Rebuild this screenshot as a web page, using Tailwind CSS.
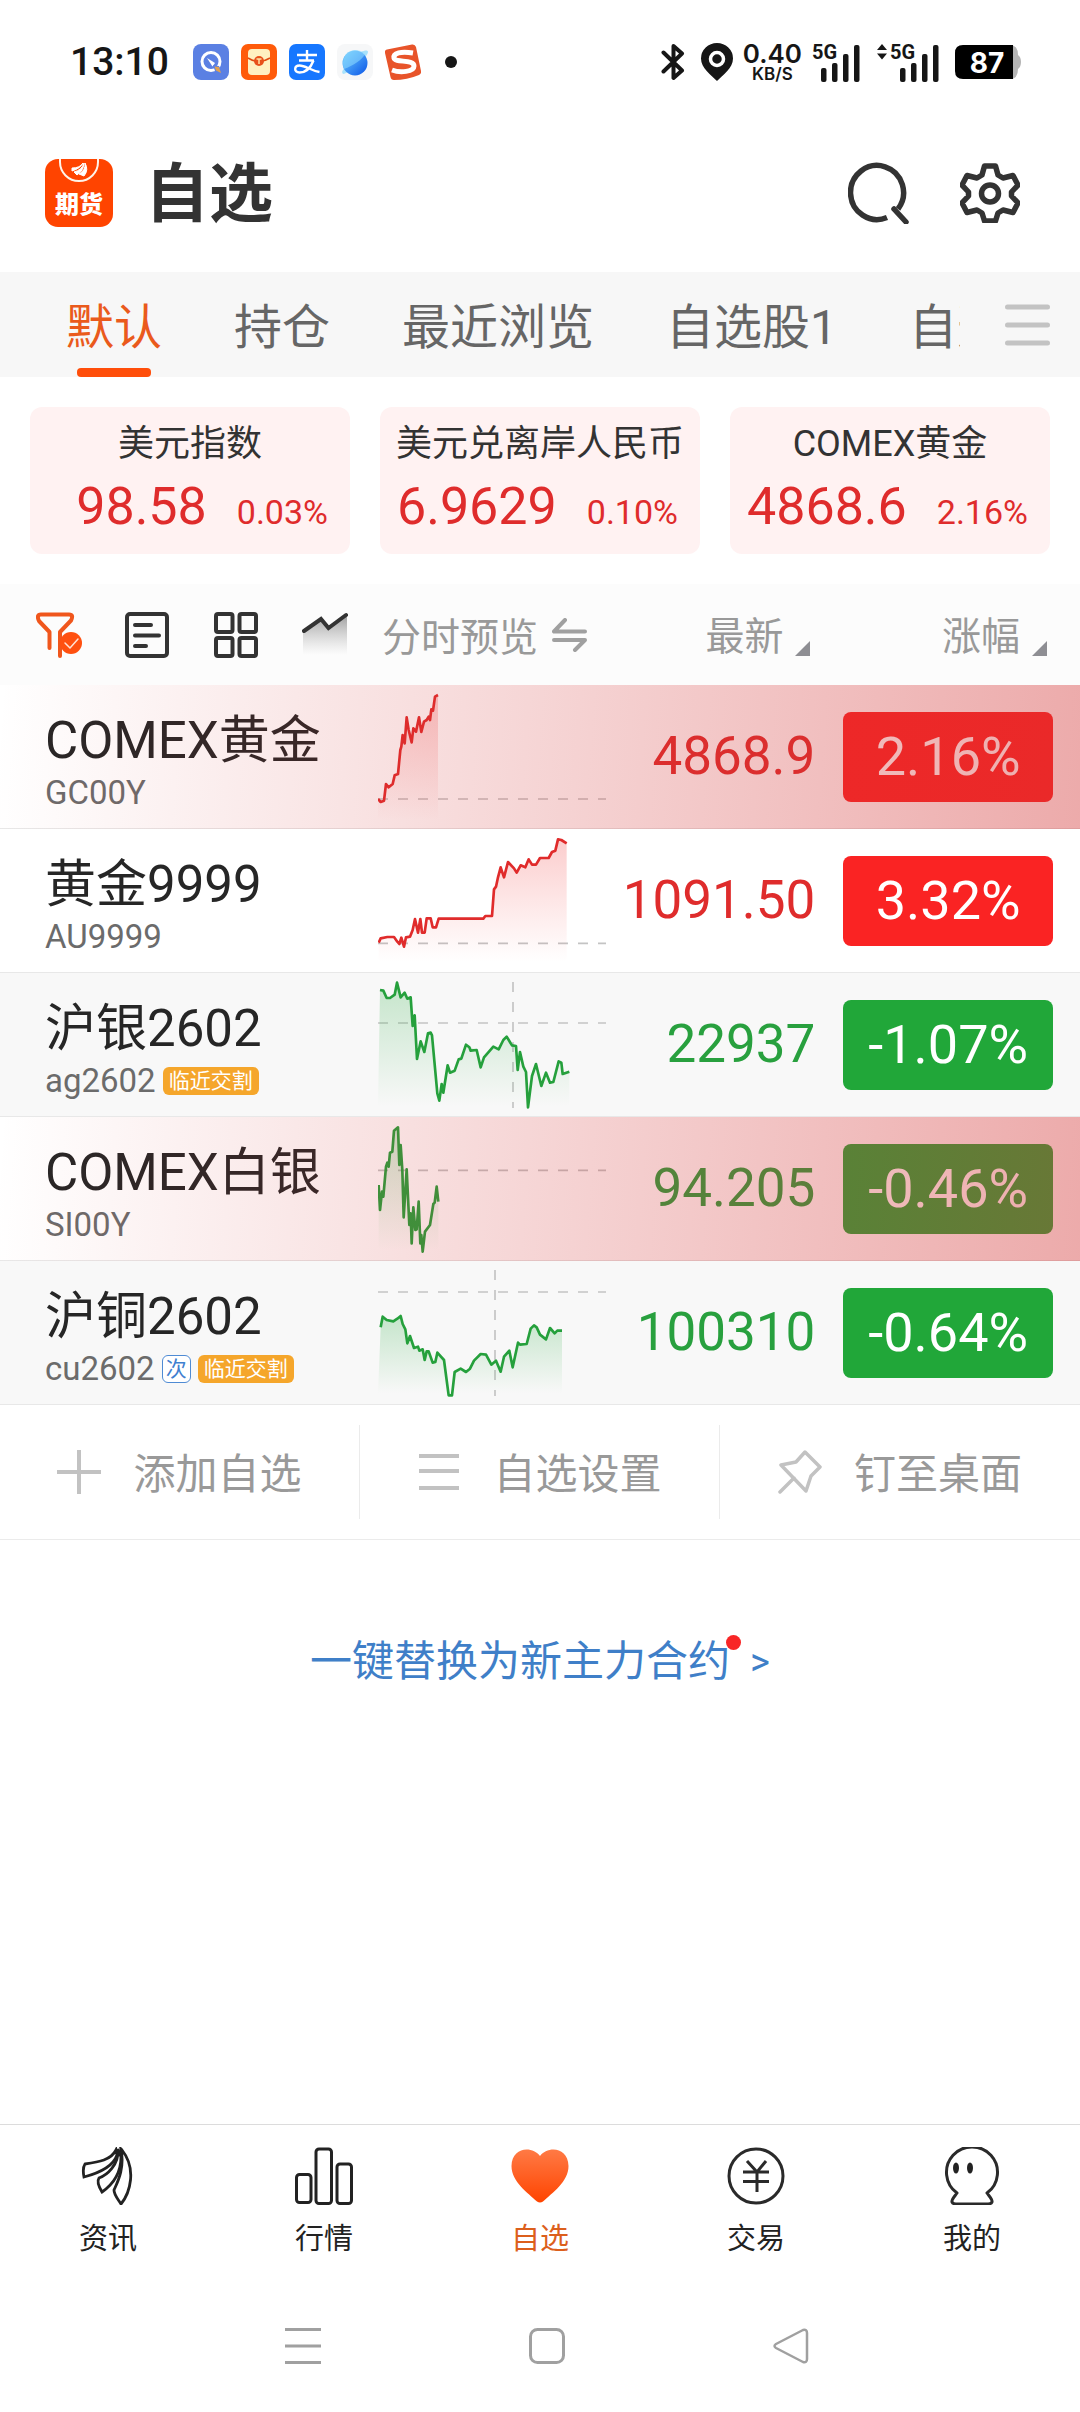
<!DOCTYPE html>
<html lang="zh-CN">
<head>
<meta charset="utf-8">
<meta name="viewport" content="width=device-width, initial-scale=1">
<title>自选</title>
<script src="https://cdn.jsdelivr.net/npm/@tailwindcss/browser@4"></script>
</head>
<body class="bg-white font-['Roboto','Noto_Sans_CJK_SC',sans-serif] text-[#262626]">
<div class="flex min-h-screen flex-col">

  <!-- Status bar -->
  <div class="flex h-[124px] items-center justify-between pr-[59px] pl-[70px]">
    <div class="flex items-center gap-3">
      <span class="mr-3 text-[39px] leading-none font-medium text-[#161616]">13:10</span>
      <svg class="size-9" viewBox="0 0 36 36"><rect width="36" height="36" rx="8" fill="#5b80e3"/><circle cx="18" cy="17.500" r="9" fill="none" stroke="#fff" stroke-width="3"/><path d="M14 14l8 5-2.500 3.500z" fill="#fff"/><path d="M20 21l6 1 3 7-7-2z" fill="#5b80e3"/><path d="M21.500 22.500l4.500.5 2 6-5-2.500z" fill="#e0a050"/></svg>
      <svg class="size-9" viewBox="0 0 36 36"><rect width="36" height="36" rx="7" fill="#ff5b0a"/><rect x="7" y="5" width="22" height="26" rx="4" fill="#fff0c0"/><path d="M7 14q11 7 22 0" fill="none" stroke="#e04a10" stroke-width="1.500"/><circle cx="18" cy="17" r="5" fill="#e8501a"/><path d="M15.500 15h5M18 15v5" stroke="#ffe0a0" stroke-width="1.500"/></svg>
      <svg class="size-9" viewBox="0 0 36 36"><rect width="36" height="36" rx="7" fill="#1677ff"/><g fill="none" stroke="#fff" stroke-width="2.400"><path d="M8 11h20M18 6v10M10 16.500h15"/><path d="M24.500 16.500C22 23 17 28.500 10.500 28.500c-6 0-5.500-7 0-7 6 0 11 5 20 6.500"/></g></svg>
      <svg class="size-9" viewBox="0 0 36 36"><defs><linearGradient id="planet" x1="0" y1="0" x2="1" y2="1"><stop offset="0" stop-color="#6fd0ff"/><stop offset="1" stop-color="#0a55e8"/></linearGradient></defs><rect width="36" height="36" rx="8" fill="#f6f7f8"/><path d="M6 30c-3-3 3-7 6-10L24 8c4-2 7-2 7 0 0 5-18 21-25 22z" fill="#a8e2fb"/><circle cx="18" cy="19" r="12.500" fill="url(#planet)"/><path d="M7 25C16 22 26 15 28 10 22 4 12 5 8 12c-2.500 4-2.500 9-1 13z" fill="#8fdcff" opacity=".55"/></svg>
      <svg class="size-9" viewBox="0 0 36 36"><path d="M2 5.500L27 .500q3-.500 4 2.500l5 24q.500 3-2 4-12 5-25 5-3 0-3.500-3L0 9q-.500-3 2-3.500z" fill="#e8542a"/><path d="M28 9C16 7 8 9 9 14c1 5 20 1 20 8 0 6-14 7-22 4" fill="none" stroke="#fff" stroke-width="5"/></svg>
      <span class="ml-3 size-3 rounded-full bg-[#161616]"></span>
    </div>
    <div class="flex items-center">
      <svg class="h-[38px] w-6" viewBox="0 0 24 38" fill="none" stroke="#161616" stroke-width="4" stroke-linejoin="round" stroke-linecap="round"><path d="M2.500 9.500L21 27.500 12.500 35V3L21 10.500 2.500 28.500"/></svg>
      <svg class="ml-4 h-[38px] w-8" viewBox="0 0 32 38"><path d="M16 0a16 15.500 0 0 1 16 15.500C32 25 22 32 16 38 10 32 0 25 0 15.500A16 15.500 0 0 1 16 0z" fill="#161616"/><circle cx="16" cy="16" r="6.500" fill="#161616" stroke="#fff" stroke-width="3.500"/></svg>
      <div class="mx-2.5 flex flex-col items-center font-['Inter'] font-semibold text-[#161616]">
        <span class="text-[26px] leading-6">0.40</span>
        <span class="text-[17px] leading-4">KB/S</span>
      </div>
      <svg class="h-10 w-12" viewBox="0 -2 48 40" fill="#161616"><text x="0" y="15" font-size="20" font-weight="700" font-family="Roboto">5G</text><rect x="9" y="24" width="5.500" height="14" rx="2"/><rect x="20" y="19" width="5.500" height="19" rx="2"/><rect x="31" y="10" width="5.500" height="28" rx="2"/><rect x="42" y="1" width="5.500" height="37" rx="2"/></svg>
      <svg class="ml-[17px] h-10 w-[62px]" viewBox="0 -2 62 40" fill="#161616"><path d="M0 6L5 0l5 6zM0 9.500L5 15.500l5-6z"/><text x="13" y="15" font-size="20" font-weight="700" font-family="Roboto">5G</text><rect x="23" y="24" width="5.500" height="14" rx="2"/><rect x="34" y="19" width="5.500" height="19" rx="2"/><rect x="45" y="10" width="5.500" height="28" rx="2"/><rect x="56" y="1" width="5.500" height="37" rx="2"/></svg>
      <svg class="ml-4 h-[34px] w-[66px]" viewBox="0 0 66 34"><path d="M50 0h5q8 0 8 10 3 2 3 7t-3 7q0 10-8 10h-5z" fill="#b5b5b5"/><path d="M8 0h50v34H8q-8 0-8-8V8q0-8 8-8z" fill="#000"/><text x="32" y="28" text-anchor="middle" font-size="28" font-weight="700" font-family="Inter" fill="#fff">87</text></svg>
    </div>
  </div>

  <!-- App header -->
  <header class="mb-2.5 flex h-[138px] items-center pr-[60px] pl-[45px]">
    <svg class="size-[68px]" viewBox="0 0 68 68"><rect width="68" height="68" rx="13" fill="#ff4400"/><path d="M15 0v3a19 19 0 0 0 38 0V0" fill="none" stroke="#fff3e8" stroke-width="2"/><path d="M27 9q8 0 11-5-2 5-11 8zM29 13q8-2 10-9 0 7-7 12zM34 15q7-4 6-11 4 7-1 13z" fill="#fff" stroke="#fff" stroke-width="1"/><text x="34" y="54" text-anchor="middle" font-size="24" font-weight="900" font-family="Noto Sans CJK SC" fill="#fff">期货</text></svg>
    <h1 class="ml-8 pt-1 text-[64px] leading-none font-bold text-[#333]">自选</h1>
    <div class="ml-auto flex items-center gap-[50px]">
      <button aria-label="搜索" class="block"><svg class="size-[62px]" viewBox="0 0 62 62" fill="none" stroke="#333" stroke-width="5.500"><path d="M39 55.500A26.500 27 0 1 1 50 47"/><path d="M46 47L58 60" stroke-linecap="round"/></svg></button>
      <button aria-label="设置" class="block"><svg class="size-[60px]" viewBox="0 0 60 60" fill="none" stroke="#333" stroke-width="5.500" stroke-linejoin="round"><path d="M24.500 3h11l2.500 9 5 3 10-2.500 5 9.500-6.500 7v4l6.500 7-5 9.500-10-2.500-5 3-2.500 8h-11l-2.500-8-5-3-10 2.500-5-9.500 6.500-7v-4l-6.500-7 5-9.500 10 2.500 5-3z"/><circle cx="30" cy="30.500" r="8.500"/></svg></button>
    </div>
  </header>

  <!-- Watchlist tabs -->
  <div class="flex h-[105px] items-stretch bg-[#f7f7f7] text-[48px] leading-none text-[#666]">
    <div class="flex flex-1 gap-[72px] overflow-hidden pl-[66px] whitespace-nowrap">
      <button class="relative shrink-0 pt-1.5 text-[#ea5a1c]">默认<span class="absolute bottom-0 left-1/2 h-[9px] w-[74px] -translate-x-1/2 rounded-sm bg-[#ff4e0a]"></span></button>
      <button class="shrink-0 pt-1.5">持仓</button>
      <button class="shrink-0 pt-1.5">最近浏览</button>
      <button class="shrink-0 pt-1.5">自选股1</button>
      <button class="shrink-0 pt-1.5">自选股2</button>
    </div>
    <button aria-label="管理分组" class="flex w-[120px] shrink-0 items-center justify-end pr-[30px]">
      <svg class="h-[42px] w-[45px]" viewBox="0 0 45 42" stroke="#c3c3c3" stroke-width="5" stroke-linecap="round"><path d="M2.500 3h40M2.500 21h40M2.500 39h40"/></svg>
    </button>
  </div>

  <!-- Index cards -->
  <section class="grid grid-cols-3 gap-[30px] p-[30px] text-[#df2c2c]">
    <a href="#" class="flex h-[147px] flex-col rounded-xl bg-[#fff2f2] pt-4">
      <span class="text-center text-[36px] leading-[42px] text-[#333]">美元指数</span>
      <span class="flex items-baseline justify-end gap-[30px] pt-2.5 pr-[22px]"><span class="text-[52px] leading-[64px]">98.58</span><span class="text-[34px]">0.03%</span></span>
    </a>
    <a href="#" class="flex h-[147px] flex-col rounded-xl bg-[#fff2f2] pt-4">
      <span class="text-center text-[36px] leading-[42px] text-[#333]">美元兑离岸人民币</span>
      <span class="flex items-baseline justify-end gap-[30px] pt-2.5 pr-[22px]"><span class="text-[52px] leading-[64px]">6.9629</span><span class="text-[34px]">0.10%</span></span>
    </a>
    <a href="#" class="flex h-[147px] flex-col rounded-xl bg-[#fff2f2] pt-4">
      <span class="text-center text-[36px] leading-[42px] text-[#333]">COMEX黄金</span>
      <span class="flex items-baseline justify-end gap-[30px] pt-2.5 pr-[22px]"><span class="text-[52px] leading-[64px]">4868.6</span><span class="text-[34px]">2.16%</span></span>
    </a>
  </section>

  <!-- Quotes -->
  <table class="w-full table-fixed border-separate border-spacing-0">
    <colgroup><col class="w-[35%]"><col class="w-[22%]"><col class="w-[18.5%]"><col class="w-[24.5%]"></colgroup>
    <thead class="bg-[#fcfcfc] text-[39px] leading-none text-[#999]">
      <tr>
        <th colspan="2" class="h-[101px] p-0 font-normal">
          <div class="flex items-center pl-9">
            <button aria-label="筛选"><svg class="h-[46px] w-[46px]" viewBox="0 0 46 46" fill="none" stroke="#f0561c" stroke-width="4" stroke-linejoin="round" stroke-linecap="round"><path d="M13.500 36V20L3 9Q0 2.500 5 2.500h28q5 0 2 6L24 20v24"/><circle cx="35" cy="31" r="11" fill="#ff5010" stroke="none"/><path d="M29 31l5 5 8-9" stroke="#ffe3d5" stroke-width="1.500"/></svg></button>
            <button aria-label="列表" class="ml-[43px]"><svg class="h-[46px] w-11" viewBox="0 0 44 46" fill="none" stroke="#333" stroke-width="4" stroke-linecap="round"><rect x="2" y="2" width="40" height="42" rx="3"/><path d="M10 13h16M10 23.500h24M10 34h11"/></svg></button>
            <button aria-label="宫格" class="ml-[45px]"><svg class="h-[46px] w-11" viewBox="0 0 44 46" fill="none" stroke="#333" stroke-width="4"><rect x="2" y="2" width="16.500" height="18" rx="2"/><rect x="25.500" y="2" width="16.500" height="18" rx="2"/><rect x="2" y="26" width="16.500" height="18" rx="2"/><rect x="25.500" y="26" width="16.500" height="18" rx="2"/></svg></button>
            <button class="ml-11 flex items-center">
              <svg class="h-[46px] w-[46px]" viewBox="0 0 46 46"><defs><linearGradient id="mini" x1="0" y1="0" x2="0" y2="1"><stop offset="0" stop-color="#555" stop-opacity=".6"/><stop offset="1" stop-color="#999" stop-opacity="0"/></linearGradient></defs><path d="M1 18L19 6l8 9L45 1v42H1z" fill="url(#mini)"/><path d="M2 19L19 7l7.500 9L44 3" fill="none" stroke="#333" stroke-width="4" stroke-linecap="round"/></svg>
              <span class="mr-3.5 ml-[34px] pt-2">分时预览</span>
              <svg class="h-[34px] w-[35px]" viewBox="0 0 35 34" fill="none" stroke="#a0a0a0" stroke-width="4" stroke-linecap="round" stroke-linejoin="round"><path d="M13 2L2 13.500h31M2 22h31L23 32"/></svg>
            </button>
          </div>
        </th>
        <th class="p-0 font-normal"><button class="ml-auto flex items-end pt-1.5 pr-[5px]">最新<svg class="mb-px ml-3 size-[15px]" viewBox="0 0 15 15"><path d="M15 0v15H0z" fill="#8e8e93"/></svg></button></th>
        <th class="p-0 font-normal"><button class="ml-auto flex items-end pt-1.5 pr-[33px]">涨幅<svg class="mb-px ml-3 size-[15px]" viewBox="0 0 15 15"><path d="M15 0v15H0z" fill="#8e8e93"/></svg></button></th>
      </tr>
    </thead>
    <tbody class="text-[54px] leading-none">
      <tr class="relative bg-white">
        <td class="h-36 border-b border-[#e8e8e8] p-0 pt-3 pl-[45px] whitespace-nowrap">
          <div class="text-[51px] leading-[60px]">COMEX黄金</div>
          <div class="flex h-11 items-center text-[33px] leading-10 text-[#6b6b6b]">GC00Y</div>
        </td>
        <td class="border-b border-[#e8e8e8] p-0">
          <svg class="block h-[143px] w-[230px]" viewBox="54 15 690 429" fill="none">
            <defs><linearGradient id="up" x1="0" y1="0" x2="0" y2="1"><stop offset="0" stop-color="#f03030" stop-opacity=".24"/><stop offset="1" stop-color="#f03030" stop-opacity="0"/></linearGradient><linearGradient id="down" x1="0" y1="0" x2="0" y2="1"><stop offset="0" stop-color="#22a83a" stop-opacity=".24"/><stop offset="1" stop-color="#22a83a" stop-opacity="0"/></linearGradient></defs>
            <path d="M54 357H738" stroke="#c4c4c4" stroke-width="5" stroke-dasharray="30 30"/>
            <path fill="url(#up)" d="M54 420V357L62 366 72 362 78 312 86 322 98 312 104 286 114 282 121 210 128 165 132 190 140 112 146 150 155 187 160 145 168 155 177 112 184 156 192 125 208 120 219 88 225 50 234 45V420z"/>
            <path stroke="#e02b2b" stroke-width="8" stroke-linejoin="round" d="M54 357L62 366 72 362 78 312 86 322 98 312 104 286 114 282 121 210 124 200 128 165 134 190 140 112 146 150 155 187 160 145 168 155 177 112 184 156 192 125 200 120 206 110 210 120 214 88 219 92 225 50 234 45"/>
          </svg>
        </td>
        <td class="border-b border-[#e8e8e8] p-0 text-right text-[53px] text-[#df2c2c]">4868.9</td>
        <td class="border-b border-[#e8e8e8] p-0 pr-[27px] pl-7"><span class="flex h-[90px] items-center justify-center rounded-lg bg-[#fa2323] text-white">2.16%</span><i class="pointer-events-none absolute inset-0 bg-[linear-gradient(94deg,rgba(210,50,50,0),rgba(210,50,50,0.41))]"></i></td>
      </tr>
      <tr class="bg-white">
        <td class="h-36 border-b border-[#e8e8e8] p-0 pt-3 pl-[45px] whitespace-nowrap">
          <div class="text-[51px] leading-[60px]">黄金9999</div>
          <div class="flex h-11 items-center text-[33px] leading-10 text-[#6b6b6b]">AU9999</div>
        </td>
        <td class="border-b border-[#e8e8e8] p-0">
          <svg class="block h-[143px] w-[230px]" viewBox="54 447 690 429" fill="none">
            <path d="M54 790H738" stroke="#c4c4c4" stroke-width="5" stroke-dasharray="30 30"/>
            <path fill="url(#up)" d="M56 845V788L62 775 100 770 118 790 124 773 132 800 138 772 150 770 165 717 174 758 181 717 190 762 200 715 212 716 218 742 228 742 236 716H370L374 708H396L402 628 414 592 422 562 432 592 444 546 470 578 482 556 496 562 506 538 516 554H526L540 534H566L576 516 586 512 594 478 620 490V845z"/>
            <path stroke="#e02b2b" stroke-width="8" stroke-linejoin="round" d="M56 788L62 775 82 771H102L112 785 118 792 124 773 132 800 138 772 150 770 158 750 165 717 174 758 181 717 186 758 194 758 200 715H212L218 742H228L236 716H370L376 708H396L402 628 408 620 414 592 422 562 432 592 444 546 462 565 470 578 482 556 496 562 506 538 516 554H528L540 534H566L576 516 586 512 594 478 604 480 620 490"/>
          </svg>
        </td>
        <td class="border-b border-[#e8e8e8] p-0 text-right text-[53px] text-[#df2c2c]">1091.50</td>
        <td class="border-b border-[#e8e8e8] p-0 pr-[27px] pl-7"><span class="flex h-[90px] items-center justify-center rounded-lg bg-[#fa2323] text-white">3.32%</span></td>
      </tr>
      <tr class="bg-[#f8f8f8]">
        <td class="h-36 border-b border-[#e8e8e8] p-0 pt-3 pl-[45px] whitespace-nowrap">
          <div class="text-[51px] leading-[60px]">沪银2602</div>
          <div class="flex h-11 items-center gap-[7px] text-[33px] leading-10 text-[#6b6b6b]">ag2602<span class="rounded-md bg-[#f5a62b] px-1.5 text-[21px] leading-7 text-white">临近交割</span></div>
        </td>
        <td class="border-b border-[#e8e8e8] p-0">
          <svg class="block h-[143px] w-[230px]" viewBox="54 9 690 429" fill="none">
            <path d="M54 159H738M459 36V414" stroke="#c4c4c4" stroke-width="5" stroke-dasharray="30 30"/>
            <path fill="url(#down)" d="M54 410L60 60 70 62 80 84 90 84 104 74 111 38 122 82 134 68 142 86 152 82 158 168 164 136 171 267 182 214 193 246 204 190 216 196 232 370 238 392 245 342 250 368 263 286 270 308 284 302 296 268 318 224 350 240 362 292 372 262 400 230 416 238 440 200 456 226 468 228 473 300 480 246 498 306 504 410 516 318 528 282 544 348 558 308 576 340 596 274 608 312 628 305V410z"/>
            <path stroke="#25a03c" stroke-width="8" stroke-linejoin="round" d="M60 60L70 62 80 84 90 84 104 74 111 38 122 82 134 68 142 86 152 82 158 168 164 136 171 267 182 214 193 246 204 190 212 188 216 196 232 370 238 392 245 342 250 368 263 286 270 308 284 302 296 268 304 266 318 224 328 232 332 242 350 240 362 292 372 262 400 230 416 238 430 210 440 200 456 226 468 228 473 300 480 246 490 290 498 306 504 412 516 318 528 282 544 348 558 308 570 338 580 336 596 274 604 278 608 312 628 305"/>
          </svg>
        </td>
        <td class="border-b border-[#e8e8e8] p-0 text-right text-[53px] text-[#28a03e]">22937</td>
        <td class="border-b border-[#e8e8e8] p-0 pr-[27px] pl-7"><span class="flex h-[90px] items-center justify-center rounded-lg bg-[#21a739] text-white">-1.07%</span></td>
      </tr>
      <tr class="relative bg-white">
        <td class="h-36 border-b border-[#e8e8e8] p-0 pt-3 pl-[45px] whitespace-nowrap">
          <div class="text-[51px] leading-[60px]">COMEX白银</div>
          <div class="flex h-11 items-center text-[33px] leading-10 text-[#6b6b6b]">SI00Y</div>
        </td>
        <td class="border-b border-[#e8e8e8] p-0">
          <svg class="block h-[143px] w-[230px]" viewBox="54 441 690 429" fill="none">
            <path d="M54 601H738" stroke="#c4c4c4" stroke-width="5" stroke-dasharray="30 30"/>
            <path fill="url(#down)" d="M56 840V645L60 720 66 665 70 680 78 590 97 545 102 482 114 472 118 585 122 525 131 742 140 598 155 820 160 712 168 780 176 695 188 840 195 785 210 765 230 650 235 695V840z"/>
            <path stroke="#25a03c" stroke-width="8" stroke-linejoin="round" d="M56 645L60 720 66 665 70 680 78 590 82 578 86 590 90 548 97 545 102 482 114 472 118 585 122 525 127 600 131 742 140 598 148 765 152 730 155 820 160 712 166 780 170 778 176 695 181 820 184 795 188 845 195 785 210 765 220 702 224 698 230 650 235 695"/>
          </svg>
        </td>
        <td class="border-b border-[#e8e8e8] p-0 text-right text-[53px] text-[#28a03e]">94.205</td>
        <td class="border-b border-[#e8e8e8] p-0 pr-[27px] pl-7"><span class="flex h-[90px] items-center justify-center rounded-lg bg-[#21a739] text-white">-0.46%</span><i class="pointer-events-none absolute inset-0 bg-[linear-gradient(94deg,rgba(210,50,50,0),rgba(210,50,50,0.41))]"></i></td>
      </tr>
      <tr class="bg-[#f8f8f8]">
        <td class="h-36 border-b border-[#e8e8e8] p-0 pt-3 pl-[45px] whitespace-nowrap">
          <div class="text-[51px] leading-[60px]">沪铜2602</div>
          <div class="flex h-11 items-center gap-[7px] text-[33px] leading-10 text-[#6b6b6b]">cu2602<span class="rounded-md border border-[#4f8bd4] bg-white px-[3px] text-[21px] leading-[26px] text-[#3f80d0]">次</span><span class="rounded-md bg-[#f5a62b] px-1.5 text-[21px] leading-7 text-white">临近交割</span></div>
        </td>
        <td class="border-b border-[#e8e8e8] p-0">
          <svg class="block h-[143px] w-[230px]" viewBox="54 873 690 429" fill="none">
            <path d="M54 966H738M405 900V1278" stroke="#c4c4c4" stroke-width="5" stroke-dasharray="30 30"/>
            <path fill="url(#down)" d="M54 1270L62 1072 68 1040 80 1050 100 1054 122 1038 142 1120 150 1098 162 1134 188 1140 194 1170 204 1142 218 1178 232 1148 252 1170 266 1270 276 1270 284 1206 302 1196 318 1206 342 1172 362 1152 378 1154 394 1184 408 1172 422 1205 432 1160 448 1142 458 1192 474 1118 500 1122 516 1072 526 1068 540 1094 558 1108 570 1074 584 1090 606 1082V1270z"/>
            <path stroke="#25a03c" stroke-width="8" stroke-linejoin="round" d="M62 1072L68 1040 80 1050 100 1054 112 1046 122 1038 128 1062 136 1078 142 1120 150 1098 162 1134 174 1130 178 1142 188 1138 194 1170 200 1144 206 1144 218 1178 226 1176 232 1148 252 1170 266 1276H276L284 1206 302 1196 318 1206 330 1196 342 1172 362 1152 378 1154 394 1184 408 1172 422 1205 432 1160 448 1142 458 1192 474 1118 480 1124 500 1122 512 1076 522 1066 530 1072 540 1094 558 1108 570 1074 584 1090 592 1082H606"/>
          </svg>
        </td>
        <td class="border-b border-[#e8e8e8] p-0 text-right text-[53px] text-[#28a03e]">100310</td>
        <td class="border-b border-[#e8e8e8] p-0 pr-[27px] pl-7"><span class="flex h-[90px] items-center justify-center rounded-lg bg-[#21a739] text-white">-0.64%</span></td>
      </tr>
    </tbody>
  </table>

  <!-- List actions -->
  <div class="grid grid-cols-3 border-b border-[#ebebeb] py-5 text-[42px] leading-none text-[#999]">
    <button class="flex h-[94px] items-center justify-center gap-8 border-r border-[#ebebeb]"><svg class="size-11" viewBox="0 0 44 44" stroke="#c2c2c2" stroke-width="4"><path d="M22 0v44M0 22h44"/></svg><span class="pt-1.5">添加自选</span></button>
    <button class="flex h-[94px] items-center justify-center gap-8 border-r border-[#ebebeb]"><svg class="size-11" viewBox="0 0 44 44" stroke="#c2c2c2" stroke-width="4"><path d="M2 6h40M2 21h40M2 38h40"/></svg><span class="pt-1.5">自选设置</span></button>
    <button class="flex h-[94px] items-center justify-center gap-8"><svg class="size-11" viewBox="0 0 44 44" fill="none" stroke="#c2c2c2" stroke-width="3.500" stroke-linejoin="round" stroke-linecap="round"><path d="M27 2L42 17 33 26 28 41 3 15 18 12zM16 28L2 42"/></svg><span class="pt-1.5">钉至桌面</span></button>
  </div>

  <a href="#" class="mt-[92px] flex items-center justify-center self-center text-[42px] leading-[60px] text-[#3f7fc8]"><span class="relative">一键替换为新主力合约<span class="absolute top-[3px] -right-[11px] size-[15px] rounded-full bg-[#f82626]"></span></span><span class="ml-5 text-[38px]">&gt;</span></a>

  <!-- Bottom navigation -->
  <nav class="mt-auto grid h-[156px] grid-cols-5 border-t border-[#dcdcdc] pt-[22px] text-[29px] leading-8 text-[#222]">
    <a href="#" class="flex flex-col items-center gap-[18px]"><svg class="size-[58px]" viewBox="0 0 58 58" fill="none" stroke="#222" stroke-width="2.800" stroke-linejoin="miter"><path d="M37 3C32 13 20 15 6 17 4 20 4 25 5 30 20 26 34 20 38 8z"/><path d="M39 2C40 18 28 28 20 31 18 34 20 40 23 45 33 38 42 28 42 10z"/><path d="M42 2C46 22 38 36 35 43 35 48 39 52 42 57 51 46 58 22 43 3z"/></svg>资讯</a>
    <a href="#" class="flex flex-col items-center gap-[18px]"><svg class="size-[58px]" viewBox="0 0 58 58" fill="none" stroke="#222" stroke-width="3"><rect x="1.500" y="27.500" width="14.500" height="28" rx="3"/><rect x="21" y="2" width="15.500" height="54.500" rx="3"/><rect x="42" y="17" width="14.500" height="39.500" rx="3"/></svg>行情</a>
    <a href="#" class="flex flex-col items-center gap-[18px] text-[#dc5f1c]"><svg class="size-[58px]" viewBox="0 0 58 58"><defs><linearGradient id="heart" x1="0" y1="0" x2="0" y2="1"><stop offset="0" stop-color="#ff7a45"/><stop offset="1" stop-color="#ff4400"/></linearGradient></defs><path d="M29 9C36-1 57-1 57.500 19 57.500 35 41 46 32 54.500q-3 2-6 0C17 46 .5 35 .5 19 1-1 22-1 29 9z" fill="url(#heart)"/></svg>自选</a>
    <a href="#" class="flex flex-col items-center gap-[18px]"><svg class="size-[58px]" viewBox="0 0 58 58" fill="none" stroke="#2a2a2a" stroke-width="3"><circle cx="29" cy="29" r="27"/><path d="M20 14l10 11 9-11M16 25h26M16 34.500h26M30 25v20"/></svg>交易</a>
    <a href="#" class="flex flex-col items-center gap-[18px]"><svg class="size-[58px]" viewBox="0 0 58 58" fill="none" stroke="#2a2a2a" stroke-width="3" stroke-linejoin="round"><path d="M14 46A25.500 25.500 0 1 1 44 46C46 49 50 53 49 55q-1 2-4 2H13q-3 0-4-2C8 53 12 49 14 46z"/><ellipse cx="13" cy="21" rx="3" ry="5.500" fill="#222" stroke="none"/><ellipse cx="27" cy="21" rx="3" ry="5.500" fill="#222" stroke="none"/></svg>我的</a>
  </nav>

  <!-- System navigation -->
  <div class="flex h-[132px] items-center justify-center gap-[208px] pl-3.5">
    <button aria-label="最近任务"><svg class="size-9" viewBox="0 0 36 36" stroke="#a0a0a0" stroke-width="3"><path d="M0 1.500h36M0 18h36M0 34.500h36"/></svg></button>
    <button aria-label="主屏幕"><svg class="size-9" viewBox="0 0 36 36" fill="none" stroke="#a0a0a0" stroke-width="3"><rect x="1.500" y="1.500" width="33" height="33" rx="7"/></svg></button>
    <button aria-label="返回"><svg class="size-9" viewBox="0 0 36 36" fill="none" stroke="#a0a0a0" stroke-width="2.500" stroke-linejoin="round"><path d="M3 16Q0 18 3 20L30 34q4 1 4-3V5q0-4-4-3z"/></svg></button>
  </div>
</div>
</body>
</html>
